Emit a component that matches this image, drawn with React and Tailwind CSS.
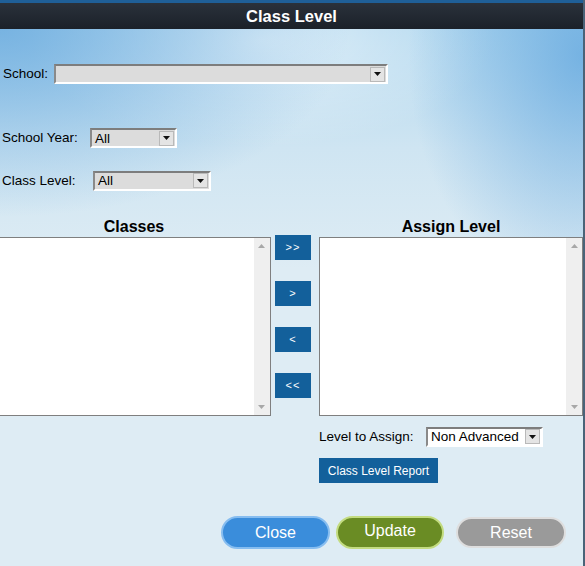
import React from "react";

const FONT = "font-['Liberation_Sans',Arial,sans-serif]";

function Arrow({ className = "" }) {
  return (
    <svg width="7" height="4" viewBox="0 0 7 4" className={className}>
      <path d="M0 0h7L3.5 4z" fill="#111" />
    </svg>
  );
}

function Select({ value, width, white = false }) {
  return (
    <div
      className={`flex h-[20px] items-center border-2 border-t-[#7d7d7d] border-l-[#8a8a8a] border-b-white border-r-white ${
        white ? "bg-white" : "bg-[#dcdcdc]"
      }`}
      style={{ width }}
    >
      <span className="flex-1 truncate pl-[3px] text-[13.5px] leading-none text-black">{value}</span>
      <div className="mr-[1px] flex h-[15px] w-[15px] items-center justify-center border border-[#b9b9b9] bg-[#e4e4e4]">
        <Arrow />
      </div>
    </div>
  );
}

function ListBox() {
  return (
    <div className="flex h-[179px] border border-[#7f7f7f] bg-white">
      <div className="flex-1" />
      <div className="flex w-[16px] flex-col items-center justify-between bg-[#efefef] py-[6px]">
        <svg width="7" height="4" viewBox="0 0 7 4">
          <path d="M0 4h7L3.5 0z" fill="#a8a8a8" />
        </svg>
        <svg width="7" height="4" viewBox="0 0 7 4">
          <path d="M0 0h7L3.5 4z" fill="#a8a8a8" />
        </svg>
      </div>
    </div>
  );
}

function MoveButton({ children }) {
  return (
    <button className="flex h-[25px] w-[36px] items-center justify-center bg-[#13609b] text-[11px] leading-none tracking-[1px] text-white">
      {children}
    </button>
  );
}

export default function App() {
  return (
    <div className={`flex h-[566px] w-[585px] flex-col overflow-hidden border-r-[2px] border-[#4a6378] ${FONT}`}>
      <div className="h-[3px] bg-[#1f5f98]" />
      <div className="flex h-[26px] items-center justify-center bg-[linear-gradient(180deg,#2a313b,#1b2129)] text-[16.5px] font-bold text-white">
        Class Level
      </div>

      <div className="flex-1 bg-[radial-gradient(ellipse_60%_35%_at_0%_0%,rgba(105,170,222,0.8),transparent),radial-gradient(ellipse_30%_45%_at_100%_5%,rgba(95,165,222,0.75),transparent),radial-gradient(ellipse_40%_20%_at_45%_2%,rgba(255,255,255,0.55),transparent),linear-gradient(180deg,#b2d8ef_0px,#cfe5f2_120px,#deecf4_240px,#deecf4_100%)]">
        <div className="mt-[35px] flex items-center pl-[3px]">
          <span className="w-[51px] text-[13.5px] text-black">School:</span>
          <Select value="" width={334} />
        </div>

        <div className="mt-[44px] flex items-center pl-[2px]">
          <span className="w-[88px] text-[13.5px] text-black">School Year:</span>
          <Select value="All" width={87} />
        </div>

        <div className="mt-[22px] flex items-center pl-[2px]">
          <span className="w-[91px] text-[13.5px] text-black">Class Level:</span>
          <Select value="All" width={118} />
        </div>

        <div className="mt-[26px] ml-[-3px] flex">
          <div className="w-[275px]">
            <div className="h-[20px] text-center text-[16px] font-bold leading-[20px] text-black">Classes</div>
            <ListBox />
          </div>
          <div className="ml-[4px] flex w-[36px] flex-col gap-[21px] pt-[18px]">
            <MoveButton>&gt;&gt;</MoveButton>
            <MoveButton>&gt;</MoveButton>
            <MoveButton>&lt;</MoveButton>
            <MoveButton>&lt;&lt;</MoveButton>
          </div>
          <div className="ml-[8px] w-[265px]">
            <div className="h-[20px] text-center text-[16px] font-bold leading-[20px] text-black">Assign Level</div>
            <ListBox />
          </div>
        </div>

        <div className="ml-[319px] mt-[11px] flex items-center">
          <span className="w-[107px] text-[13.5px] text-black">Level to Assign:</span>
          <Select value="Non Advanced" width={117} white />
        </div>

        <button className="ml-[319px] mt-[11px] flex h-[25px] w-[119px] items-center justify-center bg-[#13609b] text-[12px] text-white">
          Class Level Report
        </button>

        <div className="mt-[33px] flex items-center pl-[221px]">
          <button className="h-[33px] w-[109px] rounded-full border-2 border-[#86bdf0] bg-[#3a8ddb] text-[16px] text-white">
            Close
          </button>
          <button className="ml-[6px] h-[33px] w-[108px] rounded-full border-2 border-[#c3dc80] bg-[#6a8c24] pb-[4px] text-[16px] text-white">
            Update
          </button>
          <button className="ml-[12px] h-[31px] w-[110px] rounded-full border-2 border-[#dedede] bg-[#9a9a9a] text-[16px] text-white">
            Reset
          </button>
        </div>
      </div>
    </div>
  );
}
